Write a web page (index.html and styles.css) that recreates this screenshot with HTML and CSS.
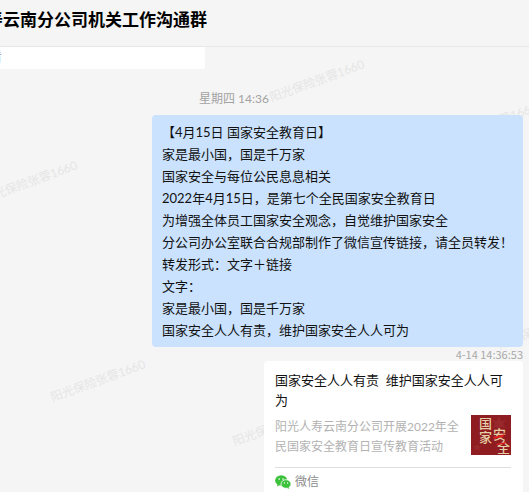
FILE: index.html
```html
<!DOCTYPE html>
<html lang="zh-CN">
<head>
    <meta charset="UTF-8">
    <title>云南分公司机关工作沟通群</title>
    <link rel="stylesheet" href="styles.css">
</head>
<body>
    <div class="chat">
        <span class="watermark wm-1">阳光保险张蓉1660</span>
        <span class="watermark wm-2">阳光保险张蓉1660</span>
        <span class="watermark wm-3">阳光保险张蓉1660</span>
        <span class="watermark wm-4">阳光保险张蓉1660</span>
        <span class="watermark wm-5">阳光保险张蓉1660</span>
        <span class="watermark wm-6">阳光保险张蓉1660</span>

        <header class="chat-header">
            <h1 class="chat-title">寿云南分公司机关工作沟通群</h1>
        </header>

        <div class="chat-body">
            <div class="prev-card"><span class="prev-text">看</span></div>
            <div class="day-label">星期四 14:36</div>

            <div class="bubble">
                <p>【4月15日 国家安全教育日】</p>
                <p>家是最小国，国是千万家</p>
                <p>国家安全与每位公民息息相关</p>
                <p>2022年4月15日，是第七个全民国家安全教育日</p>
                <p>为增强全体员工国家安全观念，自觉维护国家安全</p>
                <p>分公司办公室联合合规部制作了微信宣传链接，请全员转发！</p>
                <p>转发形式：文字＋链接</p>
                <p>文字：</p>
                <p>家是最小国，国是千万家</p>
                <p>国家安全人人有责，维护国家安全人人可为</p>
            </div>
            <div class="msg-time">4-14 14:36:53</div>

            <div class="link-card">
                <div class="link-title">国家安全人人有责&nbsp; 维护国家安全人人可为</div>
                <div class="link-main">
                    <div class="link-desc">阳光人寿云南分公司开展2022年全民国家安全教育日宣传教育活动</div>
                    <svg class="link-thumb" width="40" height="40" viewBox="0 0 40 40">
                        <rect width="40" height="40" fill="#8e1c20"/>
                        <path d="M28 1l2 5 5-1-3 4 3 4-5-1-2 5-2-5-5 1 3-4-3-4 5 1z" fill="#98282b"/>
                        <path d="M6 28l1 3 3 0-2 2 1 3-3-2-3 2 1-3-2-2 3 0z" fill="#98282b"/>
                        <text x="8" y="13" class="thumb-big">国</text>
                        <text x="8" y="27" class="thumb-big">家</text>
                        <text x="22" y="24" class="thumb-big">安</text>
                        <text x="26" y="37" class="thumb-big">全</text>
                        <path d="M22 22l12-3-2 3-9 2z" fill="#d8201f"/>
                        <path d="M25 29l10-2-1 2-8 1z" fill="#d8201f"/>
                    </svg>
                </div>
                <div class="link-source">
                    <svg class="wx-icon" width="16" height="14" viewBox="0 0 16 14">
                        <ellipse cx="6.2" cy="5.4" rx="6.1" ry="5.2" fill="#3cc13b"/>
                        <path d="M2.6 8.6L2 11.4l3-1.6z" fill="#3cc13b"/>
                        <ellipse cx="11" cy="9" rx="5" ry="4.3" fill="#3cc13b" stroke="#fff" stroke-width=".8"/>
                        <path d="M13.6 12l.7 1.9-2.4-1.1z" fill="#3cc13b"/>
                        <circle cx="4.2" cy="4" r=".8" fill="#fff"/>
                        <circle cx="8" cy="4" r=".8" fill="#fff"/>
                        <circle cx="9.4" cy="8" r=".65" fill="#fff"/>
                        <circle cx="12.6" cy="8" r=".65" fill="#fff"/>
                    </svg>
                    <span>微信</span>
                </div>
            </div>
        </div>
    </div>
</body>
</html>
```

FILE: styles.css
```css
* {
    margin: 0;
    padding: 0;
    box-sizing: border-box;
}

html, body {
    height: 100%;
    overflow: hidden;
}

body {
    font-family: Lato, "Noto Sans CJK SC", "Liberation Sans", sans-serif;
    background-color: #f5f5f5;
    color: #111;
}

.chat {
    position: relative;
    height: 492px;
    overflow: hidden;
}

.chat-header {
    height: 47px;
    border-bottom: 1px solid #e7e7e7;
    display: flex;
    align-items: center;
    overflow: hidden;
}

.chat-title {
    font-size: 17px;
    font-weight: 700;
    line-height: 24px;
    margin-left: -14px;
    margin-top: -7px;
    white-space: nowrap;
    color: #000;
}

.chat-body {
    position: relative;
    z-index: 1;
    display: flex;
    flex-direction: column;
    align-items: flex-end;
    padding-right: 6px;
}

.prev-card {
    align-self: flex-start;
    width: 205px;
    height: 22px;
    background-color: #fff;
    border-radius: 0 0 3px 0;
    overflow: hidden;
}

.prev-text {
    display: block;
    margin-left: -11px;
    font-size: 13px;
    line-height: 18px;
    color: #8a8ab8;
}

.day-label {
    align-self: flex-start;
    margin: 21px 0 0 199px;
    font-size: 12px;
    line-height: 18px;
    color: #a3a3a3;
    white-space: nowrap;
}

.bubble {
    width: 371px;
    height: 232px;
    margin-top: 7px;
    padding: 6px 10px;
    background-color: #cae2fd;
    border-radius: 4px;
    font-size: 13px;
    line-height: 22px;
    color: #111;
    white-space: nowrap;
}

.msg-time {
    font-family: "Noto Sans CJK SC", sans-serif;
    font-size: 11px;
    line-height: 14px;
    color: #a9a9a9;
}

.link-card {
    width: 259px;
    height: 140px;
    padding: 9px 12px 0 11px;
    background-color: #fff;
    border-radius: 4px;
}

.link-title {
    font-size: 13px;
    line-height: 20px;
    color: #111;
}

.link-main {
    display: flex;
    justify-content: space-between;
    margin-top: 5px;
}

.link-desc {
    width: 188px;
    margin-top: 2px;
    font-size: 12px;
    line-height: 20px;
    color: #b2b2b2;
}

.link-thumb {
    flex: none;
}

.thumb-big {
    font-size: 13px;
    font-weight: 500;
    font-family: "Noto Sans CJK SC", sans-serif;
    fill: #e6cfa6;
}

.link-source {
    display: flex;
    align-items: center;
    gap: 4px;
    margin-top: 10px;
    padding-top: 5px;
    border-top: 1px solid #dedede;
    font-size: 12px;
    line-height: 18px;
    color: #8c8c8c;
}

.wx-icon {
    flex: none;
}

/* watermark lies under the messages */
.watermark {
    position: absolute;
    font-size: 12px;
    line-height: 16px;
    color: #e5e5e5;
    white-space: nowrap;
    transform: rotate(-20deg);
    pointer-events: none;
}

.wm-1 { left: -20px; top: 174px; }
.wm-2 { left: 267px; top: 73px; }
.wm-3 { left: 48px; top: 373px; }
.wm-4 { left: 230px; top: 417px; }
.wm-5 { left: 440px; top: 116px; }
.wm-6 { left: 495px; top: 320px; }
```
